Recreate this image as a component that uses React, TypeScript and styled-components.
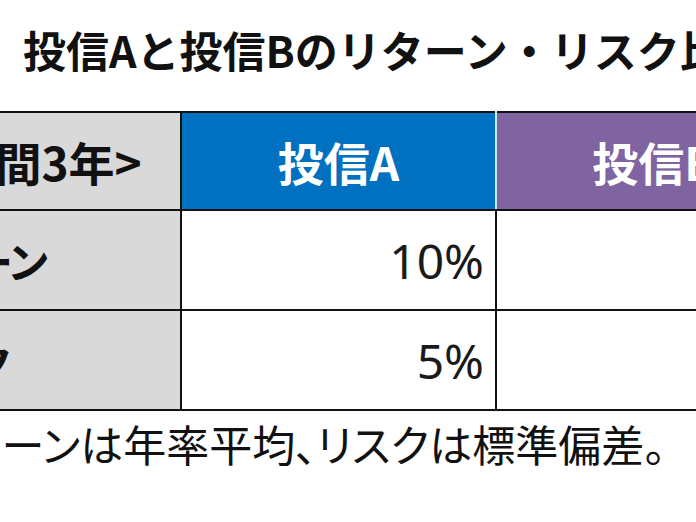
import React from "react";
import styled, { createGlobalStyle } from "styled-components";

const Global = createGlobalStyle`
  html, body { margin: 0; padding: 0; background: #fff; overflow: hidden; }
  body { font-family: "Noto Sans CJK JP", "Noto Sans", sans-serif; }
`;

const Page = styled.div`
  width: 696px;
  height: 522px;
  overflow: hidden;
  background: #fff;
  display: flex;
  flex-direction: column;
`;

const Title = styled.h1`
  margin: 0;
  padding: 25px 0 0 23px;
  height: 48px;
  font-size: 43px;
  line-height: 48px;
  font-weight: 700;
  color: #111;
  white-space: nowrap;
`;

const Bleed = styled.div`
  margin-left: -194px;
  margin-top: 38px;
`;

const Table = styled.table`
  border-collapse: collapse;
  table-layout: fixed;
  width: 1005px;
`;

const Head = styled.th<{ $bg: string; $fg: string; $sepLeft?: boolean; $sepRight?: boolean; $shift?: number }>`
  height: 96px;
  padding: 0 ${(p) => p.$shift ?? 0}px 0 0;
  background: ${(p) => p.$bg};
  color: ${(p) => p.$fg};
  font-size: 46px;
  font-weight: 700;
  text-align: center;
  white-space: nowrap;
  border: 2px solid #111;
  ${(p) => (p.$sepLeft ? "border-left: 2px solid #c6ecf5;" : "")}
  ${(p) => (p.$sepRight ? "border-right: 2px solid #c6ecf5;" : "")}
`;

const Label = styled.td`
  height: 98px;
  padding: 0 0 0 84px;
  background: #d9d9d9;
  color: #111;
  font-size: 43px;
  letter-spacing: -4px;
  font-weight: 700;
  white-space: nowrap;
  border: 2px solid #111;
`;

const Value = styled.td`
  height: 98px;
  padding: 0 11px 0 0;
  background: #fff;
  color: #1a1a1a;
  font-family: "Noto Sans", sans-serif;
  font-size: 48px;
  font-weight: 400;
  text-align: right;
  white-space: nowrap;
  border: 2px solid #111;
`;

const NoteBleed = styled.div`
  margin-left: -114px;
`;

const Note = styled.p`
  margin: 4px 0 0 0;
  font-size: 43px;
  line-height: 56px;
  color: #111;
  white-space: nowrap;
  font-feature-settings: "palt";
`;

const rows = [
  { label: "リターン", a: "10%", b: "8%" },
  { label: "リスク", a: "5%", b: "7%" },
];

export default function App() {
  return (
    <Page>
      <Global />
      <Title>投信Aと投信Bのリターン・リスク比較</Title>
      <Bleed>
        <Table>
          <colgroup>
            <col style={{ width: 374 }} />
            <col style={{ width: 315 }} />
            <col style={{ width: 316 }} />
          </colgroup>
          <thead>
            <tr>
              <Head $bg="#d9d9d9" $fg="#111" $shift={16}>{"<投資期間3年>"}</Head>
              <Head $bg="#0070c0" $fg="#fff" $sepRight>投信A</Head>
              <Head $bg="#8064a2" $fg="#fff" $sepLeft>投信B</Head>
            </tr>
          </thead>
          <tbody>
            {rows.map((r) => (
              <tr key={r.label}>
                <Label>{r.label}</Label>
                <Value>{r.a}</Value>
                <Value>{r.b}</Value>
              </tr>
            ))}
          </tbody>
        </Table>
      </Bleed>
      <NoteBleed>
        <Note>※リターンは年率平均、リスクは標準偏差。</Note>
      </NoteBleed>
    </Page>
  );
}
